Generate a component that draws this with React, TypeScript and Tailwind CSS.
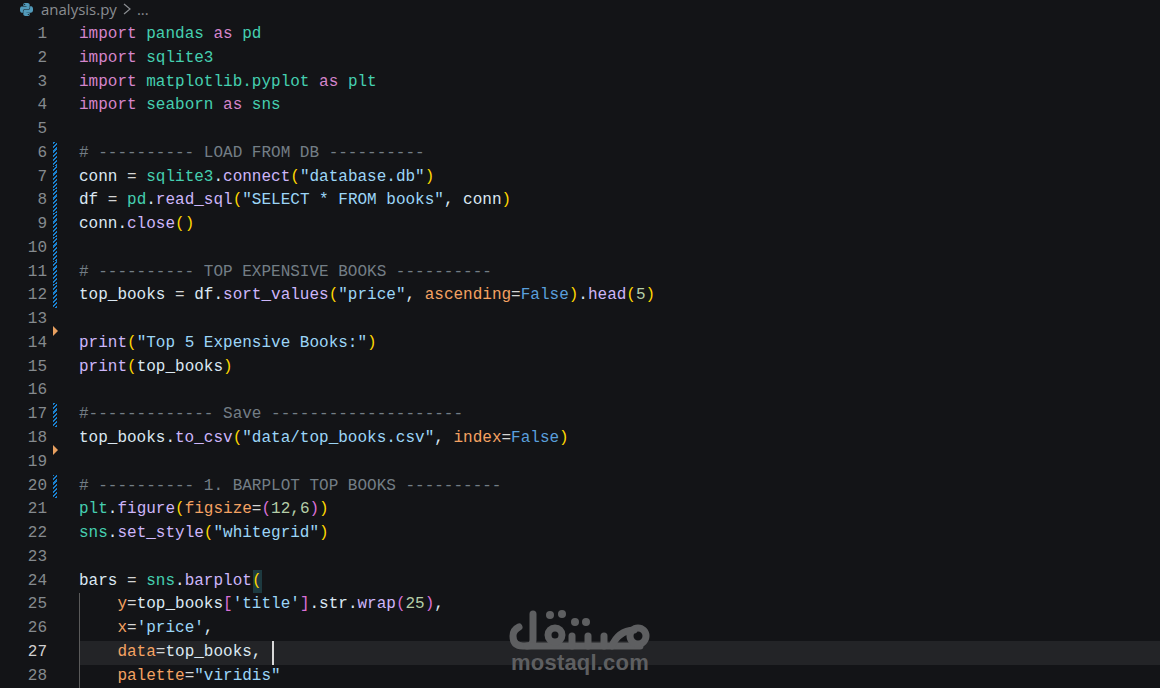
import { SiPython } from 'react-icons/si';

const K = 'text-[#d585cb]'; // keyword
const M = 'text-[#45cfb0]'; // module
const V = 'text-[#dbe8f2]'; // variable
const F = 'text-[#cdb6fa]'; // function
const S = 'text-[#9cd6f7]'; // string
const C = 'text-[#737e86]'; // comment
const P = 'text-[#f4a262]'; // parameter
const B = 'text-[#5a9fdc]'; // False
const N = 'text-[#b5cea8]'; // number
const Y = 'text-[#ffd700]';
const R = 'text-[#da70d6]';
const O = 'text-[#d4d4d4]';

type Tok = [string, string];

const LINES: Tok[][] = [
  [[K, 'import'], [V, ' '], [M, 'pandas'], [V, ' '], [K, 'as'], [V, ' '], [M, 'pd']],
  [[K, 'import'], [V, ' '], [M, 'sqlite3']],
  [[K, 'import'], [V, ' '], [M, 'matplotlib.pyplot'], [V, ' '], [K, 'as'], [V, ' '], [M, 'plt']],
  [[K, 'import'], [V, ' '], [M, 'seaborn'], [V, ' '], [K, 'as'], [V, ' '], [M, 'sns']],
  [],
  [[C, '# ---------- LOAD FROM DB ----------']],
  [[V, 'conn '], [O, '='], [V, ' '], [M, 'sqlite3'], [V, '.'], [F, 'connect'], [Y, '('], [S, '"database.db"'], [Y, ')']],
  [[V, 'df '], [O, '='], [V, ' '], [M, 'pd'], [V, '.'], [F, 'read_sql'], [Y, '('], [S, '"SELECT * FROM books"'], [V, ', conn'], [Y, ')']],
  [[V, 'conn.'], [F, 'close'], [Y, '()']],
  [],
  [[C, '# ---------- TOP EXPENSIVE BOOKS ----------']],
  [[V, 'top_books '], [O, '='], [V, ' df.'], [F, 'sort_values'], [Y, '('], [S, '"price"'], [V, ', '], [P, 'ascending'], [O, '='], [B, 'False'], [Y, ')'], [V, '.'], [F, 'head'], [Y, '('], [N, '5'], [Y, ')']],
  [],
  [[F, 'print'], [Y, '('], [S, '"Top 5 Expensive Books:"'], [Y, ')']],
  [[F, 'print'], [Y, '('], [V, 'top_books'], [Y, ')']],
  [],
  [[C, '#------------- Save --------------------']],
  [[V, 'top_books.'], [F, 'to_csv'], [Y, '('], [S, '"data/top_books.csv"'], [V, ', '], [P, 'index'], [O, '='], [B, 'False'], [Y, ')']],
  [],
  [[C, '# ---------- 1. BARPLOT TOP BOOKS ----------']],
  [[M, 'plt'], [V, '.'], [F, 'figure'], [Y, '('], [P, 'figsize'], [O, '='], [R, '('], [N, '12,6'], [R, ')'], [Y, ')']],
  [[M, 'sns'], [V, '.'], [F, 'set_style'], [Y, '('], [S, '"whitegrid"'], [Y, ')']],
  [],
  [[V, 'bars '], [O, '='], [V, ' '], [M, 'sns'], [V, '.'], [F, 'barplot'], [Y, '(']],
  [[V, '    '], [P, 'y'], [O, '='], [V, 'top_books'], [R, '['], [S, "'title'"], [R, ']'], [V, '.str.'], [F, 'wrap'], [R, '('], [N, '25'], [R, ')'], [V, ',']],
  [[V, '    '], [P, 'x'], [O, '='], [S, "'price'"], [V, ',']],
  [[V, '    '], [P, 'data'], [O, '='], [V, 'top_books,']],
  [[V, '    '], [P, 'palette'], [O, '='], [S, '"viridis"']],
];

const HATCHED = [6, 7, 8, 9, 10, 11, 12, 17, 20];
const MARKED = [13, 18]; // deleted-lines triangle sits at the bottom of these rows
const ACTIVE = 27;

function Row({ n, toks }: { n: number; toks: Tok[] }) {
  const active = n === ACTIVE;
  const guide = n >= 25;
  return (
    <div className="flex h-[23.78px] leading-[23.78px]">
      <div className={`w-[47px] shrink-0 text-right ${active ? 'text-[#d0d0d0]' : 'text-[#858a8e]'}`}>{n}</div>
      <div className="relative w-[32px] shrink-0">
        {HATCHED.includes(n) && (
          <div className="absolute top-0 bottom-0 left-[6px] w-[4px] bg-[repeating-linear-gradient(-45deg,#1b81d0_0px,#1b81d0_1.5px,#131417_1.5px,#131417_3px)]" />
        )}
        {MARKED.includes(n) && (
          <div className="absolute bottom-[-4px] left-[6px] z-10 h-0 w-0 border-y-[5px] border-l-[5px] border-y-transparent border-l-[#e8a060]" />
        )}
      </div>
      <div className={`relative flex-1 whitespace-pre ${active ? 'bg-[#232427]' : ''}`}>
        {guide && <div className="absolute top-0 bottom-0 left-0 w-px bg-[#5a5a5a]" />}
        {n === 24 && <div className="absolute top-0 bottom-0 left-[174px] w-[9px] bg-[#1d3a40]" />}
        <span className="relative">
          {toks.map(([c, t], i) => (
            <span key={i} className={c}>{t}</span>
          ))}
        </span>
        {active && <span className="absolute top-0 bottom-0 left-[193px] w-[2px] bg-[#d8d8d8]" />}
      </div>
    </div>
  );
}

function Watermark() {
  return (
    <div className="absolute top-[606px] left-[506px] z-20 flex w-[148px] flex-col items-center">
      <svg width="148" height="46" viewBox="506 606 148 46" fill="none" stroke="#5e5f61" strokeWidth="7" strokeLinecap="round" strokeLinejoin="round">
        <path d="M533 614 V640 Q533 646 527 646 H523 Q513 646 513 636 Q513 630 519 627" />
        <path d="M527 646 H640" />
        <circle cx="555" cy="635" r="7" />
        <path d="M572 636 V646" />
        <path d="M588 636 V646" />
        <path d="M604 636 V646" />
        <circle cx="638" cy="636" r="8" />
        <path d="M612 646 Q618 631 634 630" />
        <g fill="#5e5f61" stroke="none">
          <circle cx="550" cy="615" r="4" />
          <circle cx="562" cy="614" r="4" />
          <circle cx="575" cy="622" r="4" />
          <circle cx="586" cy="622" r="4" />
        </g>
      </svg>
      <span className="font-['Liberation_Sans',sans-serif] text-[22px] leading-[22px] font-bold tracking-[0.2px] text-[#5e5f61]">mostaql.com</span>
    </div>
  );
}

export default function App() {
  return (
    <div className="relative h-[688px] w-[1160px] overflow-hidden bg-[#131417] font-['Liberation_Mono',monospace] text-[16px]">
      <div className="flex h-[23px] items-center pb-[5px] pl-[20px] font-['Open_Sans',sans-serif] text-[15px] text-[#8a8d91]">
        <SiPython className="mr-[8px] h-[13px] w-[13px] text-[#519aba]" />
        <span>analysis.py</span>
        <svg className="mx-[6px]" width="8" height="12" viewBox="0 0 8 12" fill="none" stroke="#8a8d91" strokeWidth="1.2">
          <path d="M1 1l6 5-6 5" />
        </svg>
        <span>...</span>
      </div>
      {LINES.map((toks, i) => (
        <Row key={i} n={i + 1} toks={toks} />
      ))}
      <Watermark />
    </div>
  );
}
